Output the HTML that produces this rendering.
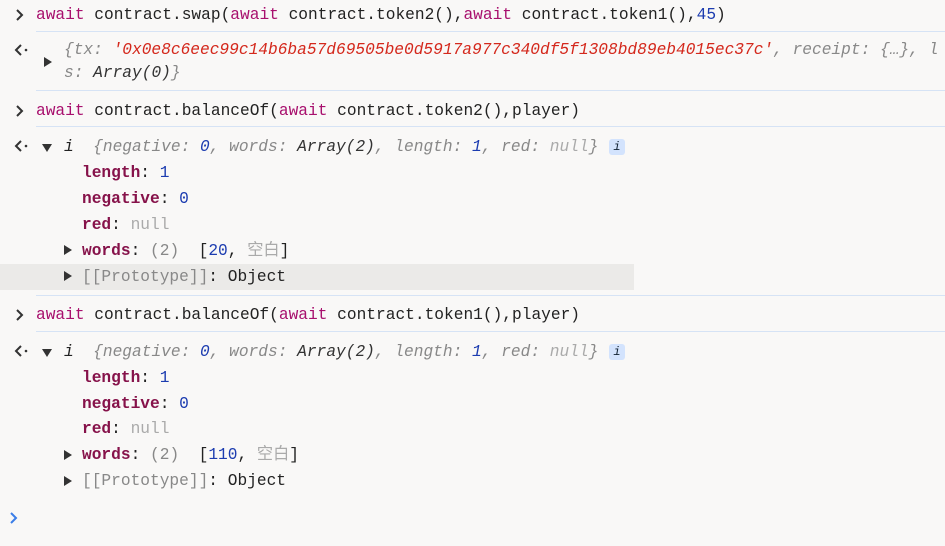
<!DOCTYPE html>
<html><head><style>
html,body{margin:0;padding:0;width:945px;height:546px;overflow:hidden;background:#f9f8f7;}
body{position:relative;font-family:"Liberation Mono","Noto Sans CJK SC",monospace;font-size:16.2px;color:#222;}
.l{position:absolute;white-space:pre;line-height:20px;}
.sep{position:absolute;left:36px;right:0;height:1px;background:#d6e3f5;}
.k{color:#a8106e}.n{color:#1c3cb0}.s{color:#d4281c}.g{color:#888}.p{color:#86124a;font-weight:bold}.nl{color:#aaa}
.i{font-style:italic}
svg.ic{position:absolute;}
.tri{position:absolute;width:0;height:0;}
.r{border-top:5px solid transparent;border-bottom:5px solid transparent;border-left:8px solid #333;}
.d{border-left:5px solid transparent;border-right:5px solid transparent;border-top:8px solid #333;}
.badge{position:absolute;width:16px;height:16px;background:#d3e3fd;border-radius:3px;font-size:12px;text-align:center;line-height:16px;font-style:italic;color:#123}
</style></head><body>
<svg class="ic" style="left:15px;top:8px" width="10" height="14"><path d="M2 2 L7 7 L2 12" fill="none" stroke="#333" stroke-width="2"/></svg>
<div class="l" style="left:36px;top:5px"><span class="k">await</span> contract.swap(<span class="k">await</span> contract.token2(),<span class="k">await</span> contract.token1(),<span class="n">45</span>)</div>
<div class="sep" style="top:31px"></div>
<svg class="ic" style="left:14px;top:43px" width="16" height="14"><path d="M7 2 L2 7 L7 12" fill="none" stroke="#333" stroke-width="2"/><circle cx="12" cy="7" r="1.3" fill="#333"/></svg>
<div class="tri r" style="left:44px;top:57px"></div>
<div class="l i g" style="left:64px;top:40px">{tx: <span class="s">'0x0e8c6eec99c14b6ba57d69505be0d5917a977c340df5f1308bd89eb4015ec37c'</span>, receipt: {…}, l</div>
<div class="l i g" style="left:64px;top:63px">s: <span style="color:#333">Array(0)</span>}</div>
<div class="sep" style="top:90px"></div>
<svg class="ic" style="left:15px;top:104px" width="10" height="14"><path d="M2 2 L7 7 L2 12" fill="none" stroke="#333" stroke-width="2"/></svg>
<div class="l" style="left:36px;top:101px"><span class="k">await</span> contract.balanceOf(<span class="k">await</span> contract.token2(),player)</div>
<div class="sep" style="top:126px"></div>
<svg class="ic" style="left:14px;top:139px" width="16" height="14"><path d="M7 2 L2 7 L7 12" fill="none" stroke="#333" stroke-width="2"/><circle cx="12" cy="7" r="1.3" fill="#333"/></svg>
<div class="tri d" style="left:42px;top:144px"></div>
<div class="l i" style="left:64px;top:137px">i  <span class="g">{negative: <span class="n">0</span>, words: <span style="color:#333">Array(2)</span>, length: <span class="n">1</span>, red: <span class="nl">null</span>}</span></div>
<div class="badge" style="left:609px;top:139px">i</div>
<div class="l" style="left:82px;top:163px"><span class="p">length</span>: <span class="n">1</span></div>
<div class="l" style="left:82px;top:189px"><span class="p">negative</span>: <span class="n">0</span></div>
<div class="l" style="left:82px;top:215px"><span class="p">red</span>: <span class="nl">null</span></div>
<div class="tri r" style="left:64px;top:245px"></div>
<div class="l" style="left:82px;top:241px"><span class="p">words</span>: <span class="g">(2)</span>  [<span class="n">20</span>, <span class="nl">空白</span>]</div>
<div style="position:absolute;left:0;top:264px;width:634px;height:26px;background:#ebeae8"></div>
<div class="tri r" style="left:64px;top:271px"></div>
<div class="l" style="left:82px;top:267px"><span class="g">[[Prototype]]</span>: Object</div>
<div class="sep" style="top:295px"></div>
<svg class="ic" style="left:15px;top:308px" width="10" height="14"><path d="M2 2 L7 7 L2 12" fill="none" stroke="#333" stroke-width="2"/></svg>
<div class="l" style="left:36px;top:305px"><span class="k">await</span> contract.balanceOf(<span class="k">await</span> contract.token1(),player)</div>
<div class="sep" style="top:331px"></div>
<svg class="ic" style="left:14px;top:344px" width="16" height="14"><path d="M7 2 L2 7 L7 12" fill="none" stroke="#333" stroke-width="2"/><circle cx="12" cy="7" r="1.3" fill="#333"/></svg>
<div class="tri d" style="left:42px;top:349px"></div>
<div class="l i" style="left:64px;top:342px">i  <span class="g">{negative: <span class="n">0</span>, words: <span style="color:#333">Array(2)</span>, length: <span class="n">1</span>, red: <span class="nl">null</span>}</span></div>
<div class="badge" style="left:609px;top:344px">i</div>
<div class="l" style="left:82px;top:368px"><span class="p">length</span>: <span class="n">1</span></div>
<div class="l" style="left:82px;top:394px"><span class="p">negative</span>: <span class="n">0</span></div>
<div class="l" style="left:82px;top:419px"><span class="p">red</span>: <span class="nl">null</span></div>
<div class="tri r" style="left:64px;top:450px"></div>
<div class="l" style="left:82px;top:445px"><span class="p">words</span>: <span class="g">(2)</span>  [<span class="n">110</span>, <span class="nl">空白</span>]</div>
<div class="tri r" style="left:64px;top:476px"></div>
<div class="l" style="left:82px;top:471px"><span class="g">[[Prototype]]</span>: Object</div>
<svg class="ic" style="left:9px;top:511px" width="10" height="14"><path d="M2 2 L7 7 L2 12" fill="none" stroke="#3b7ee8" stroke-width="2"/></svg>
</body></html>
